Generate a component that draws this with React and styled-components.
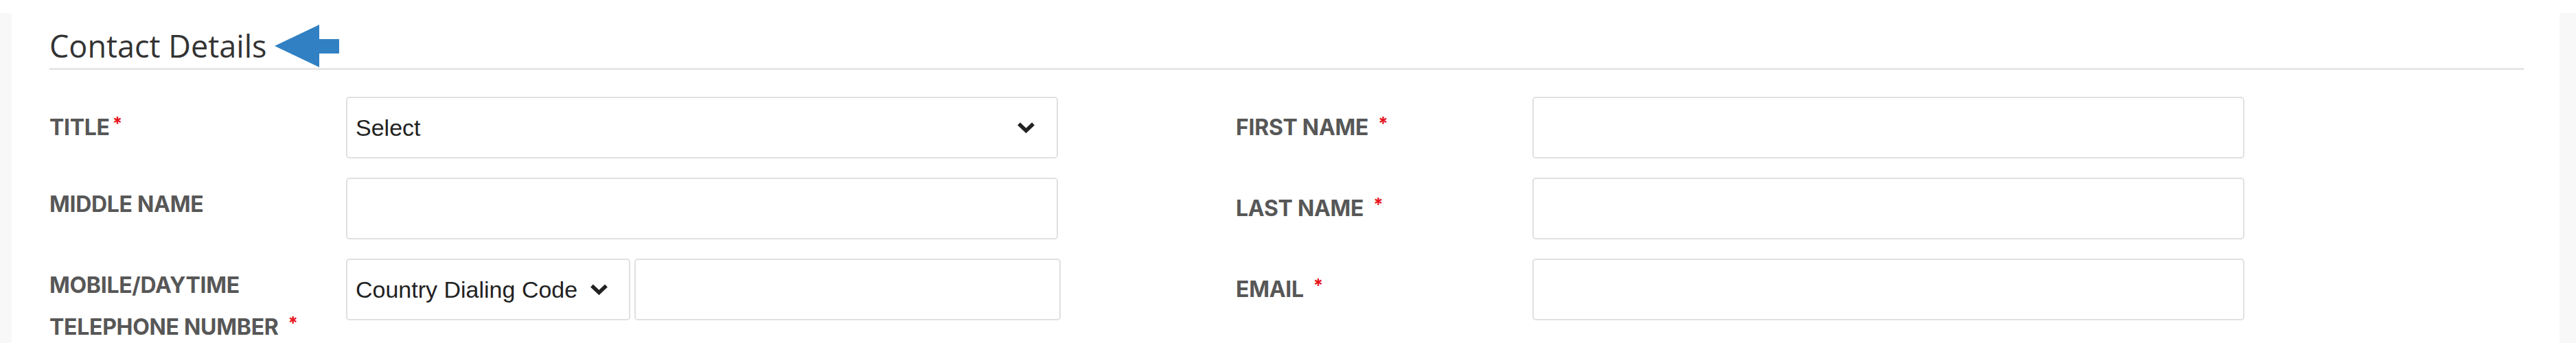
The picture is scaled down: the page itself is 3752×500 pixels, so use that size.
import styled, { createGlobalStyle } from "styled-components"

const GlobalStyle = createGlobalStyle`
  body {
    margin: 0;
    background: #ffffff;
    font-family: "Open Sans", "Liberation Sans", sans-serif;
  }
`

const Page = styled.div`
  margin-top: 19px;
  background: #f8f8f8;
  padding: 0 24px 0 17px;
  display: flex;
`

const Panel = styled.section`
  flex: 1;
  background: #ffffff;
  padding: 0 52px 40px 55px;
`

const SectionHeader = styled.div`
  display: flex;
  align-items: center;
  gap: 12px;
  height: 65px;
  padding-top: 15px;
  border-bottom: 3px solid #e6e6e6;
`

const SectionTitle = styled.h2`
  margin: 0;
  font-family: "Open Sans", sans-serif;
  font-weight: 400;
  font-size: 45px;
  line-height: 1;
  color: #333333;
`

const Form = styled.form`
  padding-top: 39px;
  display: flex;
  flex-direction: column;
  gap: 28px;
`

const Row = styled.div`
  display: flex;
  align-items: flex-start;
  gap: 259px;
`

const Field = styled.div`
  display: grid;
  grid-template-columns: 432px 1037px;
  align-items: start;
`

const Label = styled.label`
  padding-top: 11px;
  font-family: Inter, "Open Sans", sans-serif;
  font-weight: 700;
  font-size: 32px;
  line-height: 55px;
  color: #575757;
  text-transform: uppercase;
  letter-spacing: -0.3px;
`

const Req = styled.span`
  color: #e8141c;
  font-size: 26px;
  vertical-align: 8px;
  margin-left: ${p => (p.$tight ? "4px" : "14px")};
`

const boxStyles = `
  box-sizing: border-box;
  height: 90px;
  border: 2px solid #e0e0e0;
  border-radius: 5px;
  background: #ffffff;
  font-family: "Liberation Sans", Arial, sans-serif;
  font-size: 34px;
  color: #222222;
  outline: none;
`

const TextInput = styled.input`
  ${boxStyles}
  width: 100%;
  padding: 0 14px;
`

const SelectWrap = styled.div`
  position: relative;
  width: ${p => p.$width || "100%"};
  flex-shrink: 0;
`

const Select = styled.select`
  ${boxStyles}
  width: 100%;
  padding: 0 60px 0 12px;
  appearance: none;
  -webkit-appearance: none;
`

const Chevron = styled.svg`
  position: absolute;
  right: ${p => p.$right || "33px"};
  top: 50%;
  transform: translateY(-50%);
  pointer-events: none;
`

const TelGroup = styled.div`
  display: flex;
  gap: 6px;
  margin-right: -4px;

  ${TextInput} {
    flex: 1;
  }
`

const Arrow = () => (
  <svg width="94" height="62" viewBox="0 0 94 62">
    <polygon points="0,31 65,0 65,21 94,21 94,42 65,42 65,62" fill="#3180c3" />
  </svg>
)

const Caret = ({ right }) => (
  <Chevron $right={right} width="27" height="18" viewBox="0 0 27 18">
    <path d="M3 3.5 L13.5 13.5 L24 3.5" fill="none" stroke="#222" strokeWidth="5.5" />
  </Chevron>
)

const App = () => {
  return (
    <>
      <GlobalStyle />
      <Page>
        <Panel>
          <SectionHeader>
            <SectionTitle>Contact Details</SectionTitle>
            <Arrow />
          </SectionHeader>
          <Form>
            <Row>
              <Field>
                <Label>Title<Req $tight>*</Req></Label>
                <SelectWrap>
                  <Select defaultValue="">
                    <option value="">Select</option>
                    <option>Mr</option>
                    <option>Mrs</option>
                    <option>Ms</option>
                  </Select>
                  <Caret />
                </SelectWrap>
              </Field>
              <Field>
                <Label>First Name<Req>*</Req></Label>
                <TextInput type="text" />
              </Field>
            </Row>
            <Row>
              <Field>
                <Label>Middle Name</Label>
                <TextInput type="text" />
              </Field>
              <Field>
                <Label>Last Name<Req>*</Req></Label>
                <TextInput type="text" />
              </Field>
            </Row>
            <Row>
              <Field>
                <Label>Mobile/Daytime<br />Telephone Number<Req>*</Req></Label>
                <TelGroup>
                  <SelectWrap $width="414px">
                    <Select defaultValue="">
                      <option value="">Country Dialing Code</option>
                    </Select>
                    <Caret right="32px" />
                  </SelectWrap>
                  <TextInput type="tel" />
                </TelGroup>
              </Field>
              <Field>
                <Label>Email<Req>*</Req></Label>
                <TextInput type="email" />
              </Field>
            </Row>
          </Form>
        </Panel>
      </Page>
    </>
  )
}

export default App
